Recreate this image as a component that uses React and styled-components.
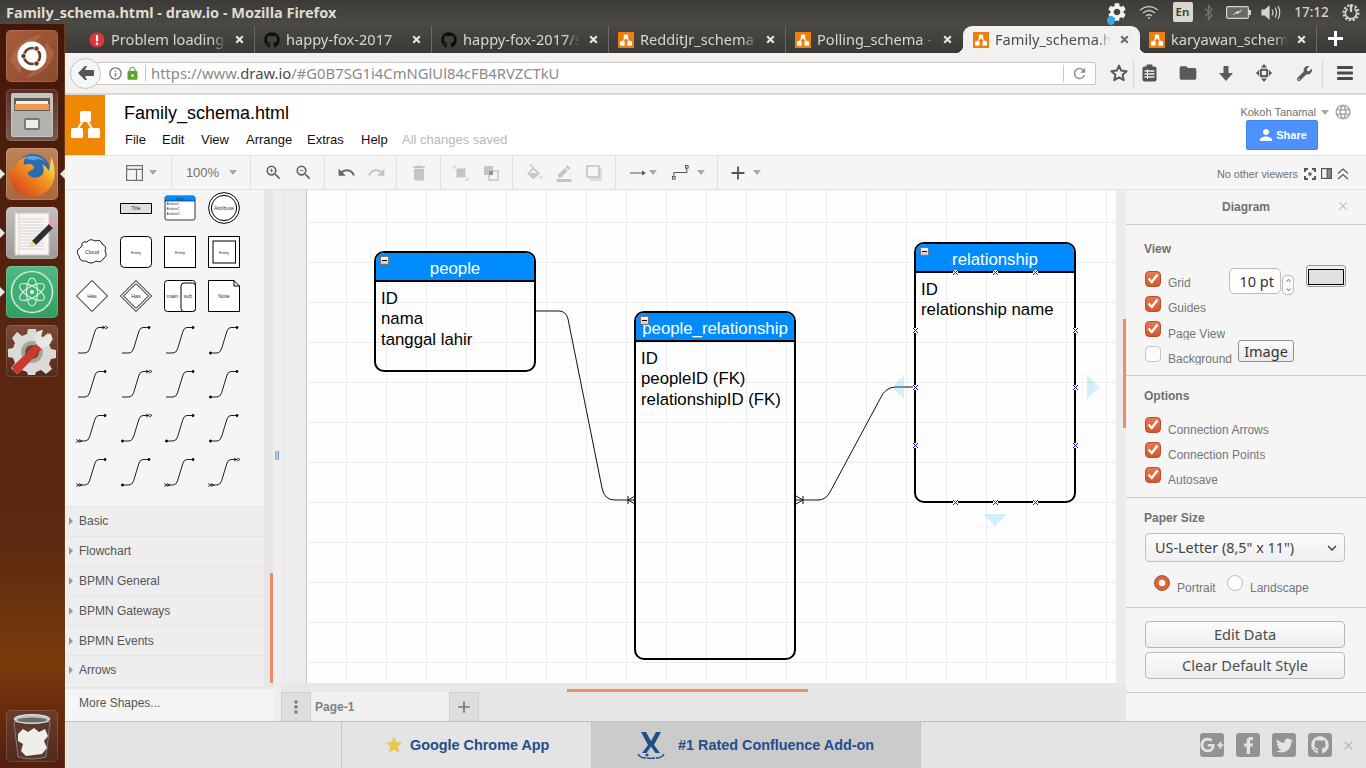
import React from "react";
import styled, { createGlobalStyle } from "styled-components";
import {
  MdZoomIn,
  MdZoomOut,
  MdUndo,
  MdRedo,
  MdDelete,
  MdBorderColor,
  MdAdd,
  MdFolder,
  MdSettings,
  MdRefresh,
  MdClose,
  MdPerson,
  MdMoreVert,
  MdLock,
  MdInfoOutline,
  MdExpandMore,
  MdKeyboardArrowUp,
  MdLanguage,
} from "react-icons/md";
import { FaGithub, FaWrench, FaGooglePlusG, FaFacebookF, FaTwitter } from "react-icons/fa";

const Global = createGlobalStyle`
  html, body {
    margin: 0;
    width: 1366px;
    height: 768px;
    overflow: hidden;
    font-family: "Liberation Sans", sans-serif;
  }
  * { box-sizing: border-box; }
`;

const UI_FONT = `"Noto Sans", "Open Sans", sans-serif`;

const Screen = styled.div`
  width: 1366px;
  height: 768px;
  display: flex;
  flex-direction: column;
  overflow: hidden;
`;
const TitleBar = styled.div`
  height: 24px;
  display: flex;
  align-items: center;
  padding-left: 6px;
  background: linear-gradient(#3c3b37, #4a4945);
  color: #dfdbd2;
  font: 700 14.5px ${UI_FONT};
`;
const TitleText = styled.div`
  flex: 1;
`;
const Tray = styled.div`
  display: flex;
  align-items: center;
  height: 24px;
  color: #d6d3cb;
`;
const TrayItem = styled.div`
  width: ${(p) => p.$w}px;
  display: flex;
  justify-content: center;
  align-items: center;
  position: relative;
`;
const BlueDot = styled.span`
  position: absolute;
  left: 1px;
  bottom: -1px;
  width: 8px;
  height: 9px;
  border-radius: 50%;
  background: #38a8e8;
`;
const LangBox = styled.div`
  width: 20px;
  height: 20px;
  margin-left: 1px;
  background: #dad7cf;
  color: #3c3b37;
  border-radius: 2px;
  font: 600 11.5px/20px ${UI_FONT};
  text-align: center;
`;
const Clock = styled.div`
  font: 500 13.5px ${UI_FONT};
  color: #d6d3cb;
`;
const Desktop = styled.div`
  flex: 1;
  display: flex;
  min-height: 0;
`;
const Launcher = styled.div`
  width: 65px;
  display: flex;
  flex-direction: column;
  align-items: center;
  gap: 7px;
  padding: 6px 1px 6px 0;
  background: linear-gradient(#451709 0%, #5a2611 45%, #5d2a10 70%, #7a3b0b 86%, #6e300c 90%, #541f0f 100%);
  border-right: 1px solid #6b3a18;
`;
const Tile = styled.div`
  width: 52px;
  height: 52px;
  border-radius: 5px;
  position: relative;
  background: ${(p) => p.$bg};
  box-shadow: inset 0 0 0 1px rgba(255, 255, 255, 0.14);
  margin-top: ${(p) => (p.$bottom ? "auto" : "0")};
  svg {
    display: block;
  }
  ${(p) =>
    p.$pip &&
    `&::before {
      content: "";
      position: absolute;
      left: -6px;
      top: 21px;
      border: 5px solid transparent;
      border-left-color: #e8e8e8;
    }`}
  ${(p) =>
    p.$active &&
    `&::after {
      content: "";
      position: absolute;
      right: -7px;
      top: 21px;
      border: 5px solid transparent;
      border-right-color: #e8e8e8;
    }`}
`;
const Browser = styled.div`
  flex: 1;
  min-width: 0;
  display: flex;
  flex-direction: column;
`;
const TabStrip = styled.div`
  height: 29px;
  display: flex;
  padding-left: 13px;
  background: linear-gradient(#4a4945, #3a3935);
`;
const Tab = styled.div`
  width: 177px;
  height: 27px;
  margin-top: 2px;
  padding: 0 8px 0 ${(p) => p.$pad || 9}px;
  display: flex;
  align-items: center;
  gap: 6px;
  position: relative;
  color: ${(p) => (p.$active ? "#4d4d4b" : "#d8d6d0")};
  font: 400 14.6px ${UI_FONT};
  border-right: 1px solid ${(p) => (p.$sep ? "#6a6964" : "transparent")};
  background: ${(p) => (p.$active ? "#f2f1f0" : "transparent")};
  border-radius: ${(p) => (p.$active ? "9px 9px 0 0" : "0")};
  ${(p) =>
    p.$active &&
    `&::before, &::after {
      content: "";
      position: absolute;
      bottom: 0;
      width: 8px;
      height: 8px;
    }
    &::before { left: -8px; background: radial-gradient(circle at 0 0, transparent 8px, #f2f1f0 8.5px); }
    &::after { right: -8px; background: radial-gradient(circle at 100% 0, transparent 8px, #f2f1f0 8.5px); }`}
`;
const TabText = styled.div`
  flex: 1;
  min-width: 0;
  margin-top: -2px;
  overflow: hidden;
  white-space: nowrap;
  -webkit-mask-image: linear-gradient(90deg, #000 88%, transparent 100%);
  mask-image: linear-gradient(90deg, #000 88%, transparent 100%);
`;
const NewTab = styled.div`
  width: 36px;
  display: flex;
  justify-content: center;
  align-items: center;
`;
const NavBar = styled.div`
  height: 42px;
  display: flex;
  align-items: center;
  padding-left: 5px;
  background: #f2f1f0;
  border-bottom: 2px solid #d8d7d5;
`;
const BackButton = styled.div`
  width: 31px;
  height: 31px;
  border-radius: 50%;
  flex: none;
  background: #f6f6f5;
  border: 1px solid #c4c4c2;
  display: flex;
  align-items: center;
  justify-content: center;
  position: relative;
  z-index: 1;
`;
const UrlBar = styled.div`
  width: 1002px;
  height: 23px;
  margin-left: -5px;
  display: flex;
  align-items: center;
  padding-left: 10px;
  background: #fff;
  border: 1px solid #c9c8c6;
  border-radius: 2px;
  color: #6f6f6f;
`;
const UrlIcon = styled.span`
  display: flex;
  width: ${(p) => p.$w}px;
  justify-content: center;
  color: ${(p) => p.$color || "#6f6f6f"};
`;
const UrlText = styled.div`
  flex: 1;
  padding-left: 5px;
  margin-left: 4px;
  border-left: 1px solid #c9c8c6;
  font: 400 14.8px/17px ${UI_FONT};
  color: #8a8a8a;
  b {
    font-weight: 400;
    color: #4b4b4b;
  }
`;
const Reload = styled.div`
  width: 32px;
  height: 17px;
  border-left: 1px solid #c9c8c6;
  display: flex;
  align-items: center;
  justify-content: center;
  color: #8e8e8e;
`;
const NavIcon = styled.div`
  width: ${(p) => p.$w}px;
  height: 28px;
  padding-left: ${(p) => p.$pad || 0}px;
  display: flex;
  align-items: center;
  justify-content: center;
  color: #5a5a5a;
  border-right: ${(p) => (p.$sep ? "1px solid #d8d7d5" : "0")};
`;
const Header = styled.div`
  height: 60px;
  display: flex;
  background: #fff;
`;
const LogoBox = styled.div`
  width: 40px;
  background: #f08705;
  svg {
    display: block;
  }
`;
const DocInfo = styled.div`
  padding: 6px 0 0 19px;
`;
const DocTitle = styled.div`
  font-size: 18px;
  line-height: 24px;
  color: #000;
`;
const MenuRow = styled.div`
  display: flex;
  margin-top: 7px;
  font-size: 13px;
  line-height: 16px;
  color: #111;
`;
const MenuItem = styled.div`
  width: ${(p) => p.$w}px;
  padding-left: 1px;
`;
const Saved = styled.div`
  margin-left: 1px;
  color: #b8b8b8;
`;
const Account = styled.div`
  margin-left: auto;
  display: flex;
  flex-direction: column;
  align-items: flex-end;
  padding-right: 14px;
  padding-top: 8px;
`;
const UserRow = styled.div`
  display: flex;
  align-items: center;
  color: #707070;
  font-size: 11px;
  height: 17px;
`;
const Caret = styled.span`
  display: inline-block;
  width: 0;
  height: 0;
  margin: ${(p) => p.$m || "2px 0 0 5px"};
  border: 4.5px solid transparent;
  border-top: 5px solid ${(p) => p.$color || "#a8a8a8"};
  border-bottom: 0;
`;
const ShareButton = styled.div`
  width: 72px;
  height: 30px;
  margin: 0 34px 0 0;
  display: flex;
  align-items: center;
  justify-content: center;
  gap: 1px;
  background: #4d90fe;
  border: 1px solid #3f82ee;
  border-radius: 2px;
  color: #fff;
  font-size: 11px;
  font-weight: 700;
`;
const Toolbar = styled.div`
  height: 35px;
  display: flex;
  background: #f5f5f5;
  border-top: 1px solid #e2e2e2;
  border-bottom: 1px solid #e2e2e2;
`;
const ToolGroup = styled.div`
  width: ${(p) => p.$w}px;
  padding-left: ${(p) => p.$pad}px;
  display: flex;
  align-items: center;
  border-right: ${(p) => (p.$last ? "0" : "1px solid #e0e0e0")};
`;
const Tool = styled.div`
  width: ${(p) => p.$w || 30}px;
  display: flex;
  justify-content: center;
  align-items: center;
  color: ${(p) => (p.$off ? "#c4c4c4" : "#666")};
`;
const ZoomLabel = styled.div`
  width: 39px;
  text-align: center;
  font-size: 13px;
  color: #707070;
`;
const Viewers = styled.div`
  margin-left: auto;
  display: flex;
  align-items: center;
  gap: 5px;
  padding: 2px 17px 0 0;
  font-size: 10.8px;
  color: #707070;
`;
const ViewersText = styled.div`
  margin-right: 1px;
`;
const Content = styled.div`
  flex: 1;
  min-height: 0;
  display: flex;
`;
const LeftColumn = styled.div`
  width: 208px;
  display: flex;
  flex-direction: column;
`;
const LeftTop = styled.div`
  flex: 1;
  display: flex;
  min-height: 0;
  position: relative;
  background: #e6e6e6;
`;
const Sidebar = styled.div`
  width: 199px;
  background: #f5f5f5;
`;
const Palette = styled.div`
  height: 316px;
  display: grid;
  grid-template-columns: repeat(4, 32px);
  grid-auto-rows: 32px;
  gap: 12px;
  padding: 2px 0 0 11px;
`;
const SectionRow = styled.div`
  height: 29.8px;
  display: flex;
  align-items: center;
  padding-left: 4px;
  gap: 6px;
  background: #eeeeee;
  border-top: 1px solid #e5e5e5;
  font-size: 12px;
  color: #555;
`;
const Arrow = styled.span`
  width: 0;
  height: 0;
  border: 4.5px solid transparent;
  border-left: 4px solid #999;
  border-right: 0;
`;
const ScrollThumb = styled.div`
  position: absolute;
  background: #f08c68;
`;
const LeftThumb = styled(ScrollThumb)`
  right: 0;
  top: 383px;
  width: 3px;
  height: 110px;
`;
const MoreShapes = styled.div`
  height: 35px;
  padding: 7px 0 0 14px;
  background: #f5f5f5;
  border-top: 3px solid #e8e8e8;
  font-size: 12px;
  color: #555;
`;
const Splitter = styled.div`
  width: 8px;
  padding-top: 260px;
  background: #eeeeee;
  text-align: center;
  font-size: 9px;
  color: #555;
`;
const CenterColumn = styled.div`
  width: 845px;
  position: relative;
  display: flex;
  flex-direction: column;
  background: #e7e7e7;
`;
const Canvas = styled.div`
  height: 493px;
  padding: 0 10px 0 25px;
  background: #ececec;
`;
const Page = styled.div`
  width: 810px;
  height: 493px;
  position: relative;
  background-color: #fff;
  border-left: 1px solid #c8c8c8;
  background-image: linear-gradient(#ececec 1px, transparent 1px), linear-gradient(90deg, #ececec 1px, transparent 1px),
    linear-gradient(#f7f7f7 1px, transparent 1px), linear-gradient(90deg, #f7f7f7 1px, transparent 1px);
  background-size: 40px 40px, 40px 40px, 8px 8px, 8px 8px;
  background-position: 0 32px, -1px 0, 0 0, -1px 0;
`;
const Node = styled.div`
  position: absolute;
  left: ${(p) => p.$x - 308}px;
  top: ${(p) => p.$y - 190}px;
  width: 162px;
  height: ${(p) => p.$h}px;
  border: 2px solid #000;
  border-radius: 10px;
  overflow: hidden;
  color: #000;
  font-size: 16.8px;
`;
const NodeHead = styled.div`
  height: 29px;
  background: #008cff;
  border-bottom: 2px solid #000;
  color: #fff;
  text-align: center;
  line-height: 32px;
`;
const NodeBody = styled.div`
  padding: 7px 0 0 5px;
  line-height: 20.4px;
`;
const Fold = styled.div`
  position: absolute;
  left: 4px;
  top: 3px;
  width: 9px;
  height: 9px;
  background: linear-gradient(#fff, #c8c8c8);
  border: 1px solid #777;
  &::after {
    content: "";
    position: absolute;
    left: 1px;
    right: 1px;
    top: 2.5px;
    height: 1.5px;
    background: #000;
  }
`;
const Overlay = styled.svg`
  position: absolute;
  left: -1px;
  top: 0;
  pointer-events: none;
`;
const HThumb = styled(ScrollThumb)`
  left: 286px;
  top: 499px;
  width: 241px;
  height: 3px;
`;
const GutterBar = styled.div`
  height: 9px;
`;
const PageTabs = styled.div`
  height: 29px;
  display: flex;
`;
const PageButton = styled.div`
  width: 30px;
  display: flex;
  align-items: center;
  justify-content: center;
  background: #dedede;
  color: #777;
  border: 1px solid #d0d0d0;
  border-bottom: 0;
`;
const PageName = styled.div`
  width: 138px;
  padding: 8px 0 0 4px;
  background: #f0f0f0;
  font-size: 12px;
  font-weight: 700;
  color: #808080;
`;
const RightPanel = styled.div`
  flex: 1;
  position: relative;
  display: flex;
  flex-direction: column;
  background: #f5f5f5;
`;
const RightThumb = styled(ScrollThumb)`
  left: -3px;
  top: 129px;
  width: 3px;
  height: 109px;
`;
const PanelTitle = styled.div`
  height: 35px;
  position: relative;
  border-bottom: 1px solid #c8c8c8;
  text-align: center;
  font-size: 12px;
  font-weight: 700;
  line-height: 34px;
  color: #707070;
`;
const PanelClose = styled.div`
  position: absolute;
  right: 16px;
  top: 9px;
  color: #b9c2cc;
  display: flex;
`;
const Section = styled.div`
  padding: ${(p) => p.$pt}px 0 ${(p) => p.$pb}px 19px;
  border-bottom: 1px solid #c8c8c8;
`;
const Heading = styled.div`
  margin-left: -1px;
  margin-bottom: ${(p) => p.$mb}px;
  font-size: 12px;
  line-height: 14px;
  font-weight: 700;
  color: #707070;
`;
const CheckRow = styled.div`
  height: 25px;
  display: flex;
  align-items: center;
`;
const CheckBox = styled.span`
  width: 16px;
  height: 16px;
  flex: none;
  display: flex;
  align-items: center;
  justify-content: center;
  border-radius: 4px;
  border: 1px solid ${(p) => (p.$on ? "#b5512c" : "#c4c4c4")};
  background: ${(p) => (p.$on ? "linear-gradient(#e9794f, #d0582e)" : "linear-gradient(#f8f8f8, #fff)")};
`;
const CheckLabel = styled.span`
  flex: none;
  width: ${(p) => (p.$w ? `${p.$w}px` : "auto")};
  margin: ${(p) => (p.$low ? 11 : 9)}px 0 0 7px;
  height: ${(p) => (p.$clip ? "13px" : "auto")};
  overflow: hidden;
  font-size: 12px;
  line-height: 14px;
  color: #757575;
`;
const SpinInput = styled.div`
  width: 52px;
  height: 26px;
  margin-top: 5px;
  padding-right: 6px;
  text-align: right;
  background: #fff;
  border: 1px solid #bdbdbd;
  border-radius: 5px;
  font: 400 14.5px/24px ${UI_FONT};
  color: #333;
`;
const Spinner = styled.div`
  width: 12px;
  height: 20px;
  margin: 13px 0 0 1px;
  display: flex;
  flex-direction: column;
  align-items: center;
  justify-content: space-evenly;
  background: #f8f8f8;
  border: 1px solid #bdbdbd;
  border-radius: 4px;
`;
const Swatch = styled.div`
  width: 40px;
  height: 22px;
  margin: -5px 0 0 12px;
  padding: 3px 1px 3px 1px;
  border: 1px solid #999;
  border-radius: 3px;
  background: #f0f0f0;
  &::after {
    content: "";
    display: block;
    height: 14px;
    background: #e0e0e0;
    border: 1px solid #000;
  }
`;
const SmallButton = styled.div`
  width: 56px;
  height: 22px;
  margin-top: -5px;
  text-align: center;
  background: linear-gradient(#fafafa, #eaeaea);
  border: 1px solid #8f8f8f;
  border-radius: 3px;
  font: 400 14.5px/20px ${UI_FONT};
  color: #333;
`;
const SelectBox = styled.div`
  width: 200px;
  height: 29px;
  padding: 0 3px 0 9px;
  display: flex;
  align-items: center;
  justify-content: space-between;
  background: linear-gradient(#fbfbfb, #efefef);
  border: 1px solid #c0c0c0;
  border-radius: 4px;
  font: 400 14.4px ${UI_FONT};
  color: #444;
`;
const RadioRow = styled.div`
  display: flex;
  align-items: center;
  height: 20px;
  margin-top: 11px;
  padding-left: 9px;
`;
const Radio = styled.span`
  width: 16px;
  height: 16px;
  flex: none;
  border-radius: 50%;
  border: ${(p) => (p.$on ? "1px solid #b5512c" : "1px solid #bdbdbd")};
  background: ${(p) =>
    p.$on ? "radial-gradient(circle, #fff 0 3px, #dd6a3e 3.6px, #d0582e 100%)" : "#fff"};
`;
const RadioLabel = styled.span`
  width: ${(p) => p.$w}px;
  margin: 9px 0 0 7px;
  font-size: 12px;
  color: #757575;
`;
const PanelButton = styled.div`
  width: 200px;
  height: 27px;
  margin-bottom: 4px;
  text-align: center;
  background: linear-gradient(#fbfbfb, #eeeeee);
  border: 1px solid #b8b8b8;
  border-radius: 4px;
  font: 400 14.6px/25px ${UI_FONT};
  color: #4d4d4d;
`;
const Footer = styled.div`
  height: 47px;
  display: flex;
  background: #e4e4e4;
  border-top: 1px solid #c4c4c4;
`;
const FooterCell = styled.div`
  width: ${(p) => p.$w}px;
  display: flex;
  align-items: center;
  padding-left: ${(p) => p.$pad}px;
  gap: ${(p) => p.$gap}px;
  background: ${(p) => (p.$dark ? "#cbcbcb" : "#e4e4e4")};
  border-right: 1px solid #c4c4c4;
  color: #224e8c;
  font-size: 14.4px;
  font-weight: 700;
`;
const Socials = styled.div`
  margin-left: auto;
  display: flex;
  align-items: center;
  gap: 12px;
  padding-right: 10px;
`;
const Social = styled.div`
  width: 24px;
  height: 24px;
  display: flex;
  align-items: center;
  justify-content: center;
  overflow: hidden;
  background: #939393;
  border-radius: 3px;
  color: #e4e4e4;
`;
const FooterClose = styled.div`
  display: flex;
  margin-left: -3px;
  color: #a9bad0;
`;

const DrawioMark = () => (
  <svg width="40" height="60" viewBox="0 0 40 60">
    <path d="M20 22 L11 37 M20 22 L29 37" stroke="#fff" strokeWidth="2" fill="none" />
    <rect x="15" y="16" width="11" height="11" rx="1.5" fill="#fff" />
    <rect x="6" y="33" width="12" height="10" rx="1.5" fill="#fff" />
    <rect x="23" y="33" width="12" height="10" rx="1.5" fill="#fff" />
  </svg>
);

const Favicon = () => (
  <svg width="16" height="16" viewBox="0 0 16 16" style={{ flex: "none" }}>
    <rect width="16" height="16" fill="#ef7f0a" />
    <path d="M8 5 L4 10 M8 5 L12 10" stroke="#fff" strokeWidth="1.2" />
    <rect x="5.8" y="2.6" width="4.4" height="4.2" fill="#fff" />
    <rect x="2" y="9.4" width="4.6" height="4.2" fill="#fff" />
    <rect x="9.4" y="9.4" width="4.6" height="4.2" fill="#fff" />
  </svg>
);

const ErrorIcon = () => (
  <svg width="16" height="16" viewBox="0 0 16 16" style={{ flex: "none" }}>
    <circle cx="8" cy="8" r="7.6" fill="#d9363e" />
    <rect x="6.9" y="3" width="2.2" height="6.6" rx="1" fill="#fff" />
    <circle cx="8" cy="11.8" r="1.3" fill="#fff" />
  </svg>
);

const GithubIcon = () => <FaGithub size={16} color="#0d0d0d" style={{ flex: "none" }} />;

const TabX = ({ dark }) => (
  <svg width="9" height="9" viewBox="0 0 9 9" style={{ flex: "none", margin: "0 2px 0 3px" }}>
    <path d="M1.2 1.2 L7.8 7.8 M7.8 1.2 L1.2 7.8" stroke={dark ? "#6a6a6a" : "#e6e4de"} strokeWidth="2.2" />
  </svg>
);

const tabs = [
  { text: "Problem loading p", icon: <ErrorIcon />, sep: true, pad: 11 },
  { text: "happy-fox-2017", icon: <GithubIcon />, sep: true },
  { text: "happy-fox-2017/s", icon: <GithubIcon />, sep: true },
  { text: "RedditJr_schema", icon: <Favicon />, sep: true },
  { text: "Polling_schema - (", icon: <Favicon /> },
  { text: "Family_schema.ht", icon: <Favicon />, active: true, pad: 10 },
  { text: "karyawan_schema", icon: <Favicon />, sep: true },
];

const UbuntuArt = () => (
  <svg width="52" height="52" viewBox="0 0 52 52">
    <path d="M4 30 Q12 8 38 4 Q20 14 14 44 Z M48 22 Q44 44 18 48 Q36 38 40 12 Z" fill="#c98a68" opacity="0.35" />
    <circle cx="26" cy="26" r="14.5" fill="#fff" />
    <circle cx="26" cy="26" r="8" fill="none" stroke="#6b3a22" strokeWidth="2.6" />
    <circle cx="17.5" cy="26" r="2.6" fill="#6b3a22" stroke="#fff" strokeWidth="0.8" />
    <circle cx="30.5" cy="18.5" r="2.6" fill="#6b3a22" stroke="#fff" strokeWidth="0.8" />
    <circle cx="30.5" cy="33.5" r="2.6" fill="#6b3a22" stroke="#fff" strokeWidth="0.8" />
  </svg>
);

const FilesArt = () => (
  <svg width="52" height="52" viewBox="0 0 52 52">
    <rect x="5" y="4" width="42" height="44" rx="2" fill="#c6c5c1" />
    <rect x="8" y="9" width="36" height="14" fill="#5f5d58" />
    <rect x="10" y="12" width="32" height="3" fill="#f3f0e6" />
    <rect x="9" y="15" width="34" height="6" fill="#ee9a52" />
    <path d="M8 22 H44 L46 24 V47 H6 V24 Z" fill="#b3b2ae" />
    <rect x="19" y="30" width="14" height="10" rx="1" fill="#ecebe8" stroke="#5c5c5a" strokeWidth="1.4" />
  </svg>
);

const FirefoxArt = () => (
  <svg width="52" height="52" viewBox="0 0 52 52">
    <defs>
      <linearGradient id="fox" x1="0.9" y1="0.1" x2="0.1" y2="0.9">
        <stop offset="0" stopColor="#ffe04a" />
        <stop offset="0.35" stopColor="#f59a22" />
        <stop offset="1" stopColor="#d9401b" />
      </linearGradient>
    </defs>
    <circle cx="27" cy="23" r="17" fill="#2b6cb0" />
    <path d="M18 10 Q30 4 40 14 Q34 10 28 12 Q22 12 18 10 Z" fill="#5ca3dc" />
    <path
      d="M45 9 C51 22 50 36 40 44 C30 51 14 50 7 38 C3 31 4 22 6 17 C7 20 9 21 9 21 C10 14 16 10 20 9 C17 13 17 16 19 17 C22 15 28 16 28 20 C26 23 22 23 22 25 C22 28 27 31 33 29 C38 27 39 22 36 16 C41 19 43 23 43 23 C44 18 45 14 45 9 Z"
      fill="url(#fox)"
    />
  </svg>
);

const EditorArt = () => (
  <svg width="52" height="52" viewBox="0 0 52 52">
    <rect x="9" y="6" width="34" height="42" fill="#f7f6f3" stroke="#c9c9c6" />
    {[12, 15, 18, 21, 24, 27, 30, 33, 36, 39, 42].map((y) => (
      <line key={y} x1="14" x2="38" y1={y} y2={y} stroke="#c4c4c4" strokeWidth="0.7" />
    ))}
    <line x1="13" x2="13" y1="6" y2="48" stroke="#eab0b0" strokeWidth="0.7" />
    <path d="M26 34 L30 38 L47 21 L43 17 Z" fill="#2f2f2f" />
    <path d="M43 17 L47 21 L50 18 Q51 16 49 14 L48 13 Q46 12 44.5 13.5 Z" fill="#ee9ac2" />
    <path d="M26 34 L30 38 L22 41 Z" fill="#f2dc80" />
  </svg>
);

const AtomArt = () => (
  <svg width="52" height="52" viewBox="0 0 52 52">
    <circle cx="26" cy="26" r="20.5" fill="#3fae73" stroke="#cfe8d9" strokeWidth="1.6" />
    <g fill="none" stroke="#d8efe2" strokeWidth="1.2">
      <ellipse cx="26" cy="26" rx="14" ry="5.5" transform="rotate(30 26 26)" />
      <ellipse cx="26" cy="26" rx="14" ry="5.5" transform="rotate(-30 26 26)" />
      <ellipse cx="26" cy="26" rx="14" ry="5.5" transform="rotate(90 26 26)" />
    </g>
    <circle cx="26" cy="26" r="2" fill="#e8f5ec" />
  </svg>
);

const SettingsArt = () => (
  <svg width="52" height="52" viewBox="0 0 52 52">
    <path
      d="M22 4 H30 L31 10 L37 12 L42 8 L47 14 L43 19 L45 24 L50 25 V33 L45 34 L43 39 L46 44 L40 49 L35 45 L30 47 L29 50 H22 L21 47 L16 45 L11 49 L5 43 L9 38 L7 33 L2 32 V24 L7 23 L9 18 L6 13 L11 7 L16 11 L21 9 Z"
      fill="#dcdad6"
    />
    <circle cx="26" cy="27" r="11" fill="#a7a5a1" />
    <circle cx="26" cy="27" r="7" fill="#6f463a" />
    <path d="M8 47 L12 49 L36 24 L30 19 L6 42 Z" fill="#c93a2e" />
    <path d="M30 19 L36 24 L44 19 Q48 13 44 8 L39 14 L35 12 L37 5 Q30 5 29 11 Z" fill="#e8e6e2" />
  </svg>
);

const TrashArt = () => (
  <svg width="52" height="52" viewBox="0 0 52 52">
    <path d="M8 12 L12 47 Q26 51 40 47 L44 12 Z" fill="#5a3a2c" stroke="#8a7a70" />
    <ellipse cx="26" cy="9" rx="18" ry="4.5" fill="#c5c5c3" stroke="#e2e2e0" />
    <ellipse cx="26" cy="10" rx="15" ry="2.5" fill="#6b6b69" />
    <path
      d="M12 24 L17 19 L22 22 L28 18 L33 22 L39 19 L42 26 L38 31 L41 38 L36 44 L28 45 L20 46 L15 41 L17 34 L12 31 Z"
      fill="#eeeeec"
    />
  </svg>
);

const LayoutIcon = () => (
  <svg width="17" height="16" viewBox="0 0 17 16" fill="none" stroke="#707070" strokeWidth="1.2">
    <rect x="0.6" y="0.6" width="15.8" height="14.8" />
    <path d="M0.6 4.4 H16.4 M10.5 4.4 V15.4" />
  </svg>
);

const ToFrontIcon = () => (
  <svg width="16" height="16" viewBox="0 0 16 16" fill="none" stroke="#c8c8c8" strokeWidth="1.2">
    <path d="M3.5 1 H1 V4 M15 12.5 V15 H12" />
    <rect x="3.5" y="3.5" width="9" height="9" fill="#c4c4c4" stroke="none" />
  </svg>
);

const ToBackIcon = () => (
  <svg width="16" height="16" viewBox="0 0 16 16">
    <rect x="1" y="1" width="9" height="9" fill="#c4c4c4" />
    <rect x="6" y="6" width="9" height="9" fill="none" stroke="#c4c4c4" strokeWidth="1.4" />
    <rect x="6" y="6" width="4" height="4" fill="#8f8f8f" />
  </svg>
);

const BucketIcon = () => (
  <svg width="17" height="17" viewBox="0 0 17 17">
    <path d="M4 0.5 L8.5 5" stroke="#c8c8c8" strokeWidth="1.6" />
    <path d="M7.5 3 L14 9.5 L7.5 15.5 L1 9.5 Z" fill="#c8c8c8" />
    <path d="M7.5 5.5 L11 9 H4 Z" fill="#f5f5f5" />
    <circle cx="15" cy="13.5" r="1.7" fill="#dcdcdc" />
  </svg>
);

const ShadowIcon = () => (
  <svg width="16" height="16" viewBox="0 0 16 16">
    <rect x="3" y="3" width="13" height="13" fill="#dedede" />
    <rect x="1" y="1" width="12" height="11" fill="#f5f5f5" stroke="#c4c4c4" strokeWidth="1.6" />
  </svg>
);

const ArrowIcon = () => (
  <svg width="16" height="10" viewBox="0 0 16 10">
    <path d="M0 5 H12" stroke="#555" strokeWidth="1" />
    <path d="M12 2.5 L16 5 L12 7.5 Z" fill="#555" />
  </svg>
);

const WaypointIcon = () => (
  <svg width="17" height="15" viewBox="0 0 17 15" fill="none" stroke="#555" strokeWidth="1">
    <rect x="0.5" y="11.5" width="2.6" height="2.6" />
    <rect x="13.5" y="0.5" width="2.6" height="2.6" />
    <path d="M1.8 11.5 V7.5 H14.8 V3.1" />
  </svg>
);

const BackArrow = () => (
  <svg width="16" height="14" viewBox="0 0 16 14" fill="#555">
    <path d="M0 7 L7 0 H9 L7 4 H15 Q16 4 16 5 V9 Q16 10 15 10 H7 L9 14 H7 Z" />
  </svg>
);

const PlusIcon = () => (
  <svg width="15" height="15" viewBox="0 0 15 15" fill="#fff">
    <path d="M6 0 H9 V6 H15 V9 H9 V15 H6 V9 H0 V6 H6 Z" />
  </svg>
);

const StarOutline = () => (
  <svg width="18" height="18" viewBox="0 0 18 18" fill="none" stroke="#5a5a5a" strokeWidth="2" strokeLinejoin="round">
    <path d="M9 1.6 L11.2 6.6 L16.6 7.2 L12.6 10.8 L13.7 16.2 L9 13.4 L4.3 16.2 L5.4 10.8 L1.4 7.2 L6.8 6.6 Z" />
  </svg>
);

const DownloadIcon = () => (
  <svg width="14" height="15" viewBox="0 0 14 15" fill="#5a5a5a">
    <path d="M4.5 0 H9.5 V7 H14 L7 15 L0 7 H4.5 Z" />
  </svg>
);

const MoveIcon = () => (
  <svg width="16" height="18" viewBox="0 0 16 18" fill="#535353">
    <path d="M8 0 L11 3.4 H5 Z M8 18 L11 14.6 H5 Z M0 9 L3 6 V12 Z M16 9 L13 6 V12 Z" />
    <rect x="3.8" y="4.8" width="8.4" height="8.4" rx="1.5" />
    <rect x="5.8" y="6.8" width="4.4" height="4.4" fill="#f2f1f0" />
  </svg>
);

const ClipboardIcon = () => (
  <svg width="15" height="18" viewBox="0 0 15 18">
    <rect x="0.5" y="2.5" width="14" height="15" rx="2" fill="#535353" />
    <rect x="4.5" y="0.5" width="6" height="3.5" rx="1" fill="#535353" />
    <path d="M2.5 7 H12.5 M2.5 10 H12.5 M2.5 13 H12.5" stroke="#f2f1f0" strokeWidth="1.4" />
    <path d="M5.5 5.5 V15" stroke="#f2f1f0" strokeWidth="1" />
  </svg>
);

const MenuIcon = () => (
  <svg width="16" height="14" viewBox="0 0 16 14" fill="#4a4a4a">
    <rect width="16" height="3" rx="1" />
    <rect y="5.5" width="16" height="3" rx="1" />
    <rect y="11" width="16" height="3" rx="1" />
  </svg>
);

const FocusIcon = () => (
  <svg width="12" height="12" viewBox="0 0 12 12" fill="#555">
    <path d="M0 0 H4 V2 H2 V4 H0 Z M12 0 H8 V2 H10 V4 H12 Z M0 12 H4 V10 H2 V8 H0 Z M12 12 H8 V10 H10 V8 H12 Z" />
    <rect x="4.5" y="4.5" width="3" height="3" />
  </svg>
);

const SplitIcon = () => (
  <svg width="11" height="11" viewBox="0 0 11 11" fill="none" stroke="#555" strokeWidth="1.2">
    <rect x="0.6" y="0.6" width="9.8" height="9.8" />
    <rect x="6.2" y="0.6" width="4.2" height="9.8" fill="#888" />
  </svg>
);

const CollapseIcon = () => (
  <svg width="12" height="12" viewBox="0 0 12 12" fill="none" stroke="#555" strokeWidth="1.2">
    <path d="M1 5.5 L6 1 L11 5.5 M1 11 L6 6.5 L11 11" />
  </svg>
);

const WifiIcon = () => (
  <svg width="20" height="15" viewBox="0 0 20 15" fill="none" stroke="#c8c5bd" strokeWidth="1.4">
    <path d="M1 5 Q10 -2 19 5 M4 8 Q10 3 16 8 M7 11 Q10 8.6 13 11" />
    <circle cx="10" cy="13" r="1" fill="#c8c5bd" stroke="none" />
  </svg>
);

const BluetoothIcon = () => (
  <svg width="9" height="17" viewBox="0 0 9 17" fill="none" stroke="#77756f" strokeWidth="1.2">
    <path d="M1 4.5 L8 11.5 L4.5 15.5 V1.5 L8 5.5 L1 12.5" />
  </svg>
);

const BatteryIcon = () => (
  <svg width="25" height="13" viewBox="0 0 25 13">
    <rect x="0.6" y="0.6" width="21.8" height="11.8" rx="1.5" fill="#6a6964" stroke="#d6d3cb" strokeWidth="1.2" />
    <rect x="23" y="4" width="2" height="5" fill="#d6d3cb" />
    <path d="M7 9 L11 6 L11 8 L16 4 L12 6.6 L12 5 Z" fill="#e8e6e0" stroke="#e8e6e0" strokeWidth="0.6" />
  </svg>
);

const VolumeIcon = () => (
  <svg width="20" height="15" viewBox="0 0 20 15" fill="none" stroke="#d6d3cb" strokeWidth="1.2">
    <path d="M1 5 H4 L8 1.5 V13.5 L4 10 H1 Z" fill="#d6d3cb" />
    <path d="M11 4.5 Q13 7.5 11 10.5 M14 2.5 Q17 7.5 14 12.5 M17 1 Q20.5 7.5 17 14" />
  </svg>
);

const PowerIcon = () => (
  <svg width="18" height="18" viewBox="0 0 24 24" fill="none" stroke="#d6d3cb">
    <circle cx="12" cy="13" r="10" strokeWidth="3" strokeDasharray="3 2.2" />
    <path d="M7.5 7.5 A7.5 7.5 0 1 0 16.5 7.5" strokeWidth="2.2" />
    <path d="M12 2 V12" strokeWidth="3" />
  </svg>
);

const StarBadge = () => (
  <svg width="16" height="16" viewBox="0 0 16 16">
    <path d="M8 0.6 L10.2 5.4 L15.4 6 L11.6 9.5 L12.6 14.8 L8 12.2 L3.4 14.8 L4.4 9.5 L0.6 6 L5.8 5.4 Z" fill="#f0c83c" stroke="#dcc58c" />
  </svg>
);

const AtlassianMark = () => (
  <svg width="28" height="28" viewBox="0 0 28 28">
    <path d="M4 1 H9 L14 10 L19 1 H24 L17 14 L23 22 H18.5 L14 15.5 L9.5 22 H5 L11 14 Z" fill="#1f4f8b" />
    <path d="M1 23 Q3 27 9 27 M27 23 Q25 27 19 27 M10 27 Q14 28 18 27" fill="none" stroke="#1f4f8b" strokeWidth="1.6" />
    <circle cx="10" cy="24" r="1.6" fill="#1f4f8b" />
  </svg>
);

const InkBox = styled.svg`
  display: block;
`;
const thumbText = { fontFamily: "Liberation Sans", textAnchor: "middle", fill: "#333" };

const Thumb = ({ children }) => (
  <InkBox width="32" height="32" viewBox="0 0 32 32" fill="#fff" stroke="#000">
    {children}
  </InkBox>
);

const Label = ({ x = 16, y = 17.5, size = 4, children }) => (
  <text x={x} y={y} fontSize={size} stroke="none" {...thumbText}>
    {children}
  </text>
);

const Curve = ({ start, end }) => (
  <Thumb>
    <path d="M2 29 H9 Q12 29 13.5 25 L19 7 Q20 3.5 23 3.5 H29" fill="none" strokeWidth="1" stroke="#222" />
    {start === 1 && <circle cx="2.5" cy="29" r="1" fill="#000" />}
    {start === 2 && <path d="M0 27.5 L3 29 L0 30.5 M3 27.5 L6 29 L3 30.5" fill="none" strokeWidth="0.7" />}
    {end === 1 && <circle cx="29" cy="3.5" r="1" fill="#000" />}
    {end === 2 && <path d="M26 2 L29 3.5 L26 5 M29 2 L32 3.5 L29 5" fill="none" strokeWidth="0.7" />}
  </Thumb>
);

const paletteThumbs = [
  null,
  <Thumb>
    <rect x="0.5" y="11.5" width="31" height="10" fill="#e0e0e0" />
    <Label y="17.5" size="5">Title</Label>
  </Thumb>,
  <Thumb>
    <rect x="1" y="4" width="30" height="24" rx="2" fill="#fff" stroke="#333" />
    <path d="M1 6 Q1 4 3 4 H29 Q31 4 31 6 V9 H1 Z" fill="#008cff" stroke="none" />
    <path d="M1 9 H31" strokeWidth="0.6" />
    <Label y="8" size="3">Entity</Label>
    <Label x="9" y="13" size="3">Attribute1</Label>
    <Label x="9" y="18" size="3">Attribute2</Label>
    <Label x="9" y="23" size="3">Attribute3</Label>
  </Thumb>,
  <Thumb>
    <circle cx="16" cy="16" r="15.4" strokeWidth="1" />
    <circle cx="16" cy="16" r="12.6" strokeWidth="1" />
    <Label y="18" size="5.4">Attribute</Label>
  </Thumb>,
  <Thumb>
    <path d="M6 10 Q5 5 11 6 Q14 2 19 5 Q25 3 26 8 Q31 10 29 15 Q32 20 27 23 Q25 27 20 25 Q15 29 10 25 Q4 26 3 20 Q-1 15 4 12 Z" strokeWidth="0.9" />
    <Label size="5.4">Cloud</Label>
  </Thumb>,
  <Thumb>
    <rect x="0.5" y="0.5" width="31" height="31" rx="4" />
    <Label>Entity</Label>
  </Thumb>,
  <Thumb>
    <rect x="0.5" y="0.5" width="31" height="31" />
    <Label>Entity</Label>
  </Thumb>,
  <Thumb>
    <rect x="0.5" y="0.5" width="31" height="31" />
    <rect x="5" y="5" width="22.5" height="22" />
    <Label>Entity</Label>
  </Thumb>,
  <Thumb>
    <path d="M16 0.5 L31.5 16 L16 31.5 L0.5 16 Z" />
    <Label size="5.4">Has</Label>
  </Thumb>,
  <Thumb>
    <path d="M16 0.5 L31.5 16 L16 31.5 L0.5 16 Z" />
    <path d="M16 3.5 L28.5 16 L16 28.5 L3.5 16 Z" />
    <Label size="5.4">Has</Label>
  </Thumb>,
  <Thumb>
    <rect x="0.5" y="0.5" width="31" height="31" rx="3" />
    <rect x="17" y="3" width="14.5" height="28.5" rx="3" />
    <Label x="8.5" y="18" size="5.4">main</Label>
    <Label x="24" y="18" size="5.4">sub</Label>
  </Thumb>,
  <Thumb>
    <path d="M0.5 0.5 H26 L31.5 6 V31.5 H0.5 Z M26 0.5 V6 H31.5" />
    <Label size="5.4">Note</Label>
  </Thumb>,
  <Curve end={2} />,
  <Curve end={1} />,
  <Curve end={1} />,
  <Curve start={1} end={1} />,
  <Curve end={1} />,
  <Curve end={2} />,
  <Curve end={1} />,
  <Curve start={1} end={1} />,
  <Curve start={2} end={1} />,
  <Curve start={1} end={2} />,
  <Curve start={1} end={1} />,
  <Curve start={1} end={1} />,
  <Curve start={2} end={1} />,
  <Curve start={1} end={1} />,
  <Curve start={2} end={1} />,
  <Curve start={2} end={2} />,
];

const sections = ["Basic", "Flowchart", "BPMN General", "BPMN Gateways", "BPMN Events", "Arrows"];

const menu = [
  ["File", 37],
  ["Edit", 39],
  ["View", 45],
  ["Arrange", 61],
  ["Extras", 54],
  ["Help", 41],
];

const nodes = [
  { x: 375, y: 251, h: 121, title: "people", rows: ["ID", "nama", "tanggal lahir"] },
  { x: 635, y: 311, h: 349, title: "people_relationship", rows: ["ID", "peopleID (FK)", "relationshipID (FK)"] },
  { x: 915, y: 242, h: 261, title: "relationship", rows: ["ID", "relationship name"] },
];

const marks = [
  [955, 272], [995, 272], [1035, 272],
  [955, 502], [995, 502], [1035, 502],
  [915, 330], [915, 387], [915, 445],
  [1075, 330], [1075, 387], [1075, 445],
];

const Check = () => (
  <svg width="12" height="11" viewBox="0 0 12 11" fill="none" stroke="#fff" strokeWidth="2.4">
    <path d="M1.5 5.5 L4.8 9 L10.5 1.5" />
  </svg>
);

const CheckItem = ({ on, label, w, clip, low, children }) => (
  <CheckRow>
    <CheckBox $on={on}>{on && <Check />}</CheckBox>
    <CheckLabel $w={w} $clip={clip} $low={low}>
      {label}
    </CheckLabel>
    {children}
  </CheckRow>
);

export default function App() {
  return (
    <Screen>
      <Global />
      <TitleBar>
        <TitleText>Family_schema.html - draw.io - Mozilla Firefox</TitleText>
        <Tray>
          <TrayItem $w={22}>
            <MdSettings size={24} color="#f4f2ec" />
            <BlueDot />
          </TrayItem>
          <TrayItem $w={42}>
            <WifiIcon />
          </TrayItem>
          <TrayItem $w={24}>
            <LangBox>En</LangBox>
          </TrayItem>
          <TrayItem $w={28}>
            <BluetoothIcon />
          </TrayItem>
          <TrayItem $w={32}>
            <BatteryIcon />
          </TrayItem>
          <TrayItem $w={34}>
            <VolumeIcon />
          </TrayItem>
          <TrayItem $w={47}>
            <Clock>17:12</Clock>
          </TrayItem>
          <TrayItem $w={31}>
            <PowerIcon />
          </TrayItem>
        </Tray>
      </TitleBar>
      <Desktop>
        <Launcher>
          <Tile $bg="linear-gradient(135deg, #a85c3c, #8a4a2e)">
            <UbuntuArt />
          </Tile>
          <Tile $bg="linear-gradient(#5a2e24, #7a5a50)">
            <FilesArt />
          </Tile>
          <Tile $bg="linear-gradient(#bd8458, #a9683e)" $pip $active>
            <FirefoxArt />
          </Tile>
          <Tile $bg="linear-gradient(#c2c0bd, #9d9a97)" $pip>
            <EditorArt />
          </Tile>
          <Tile $bg="linear-gradient(#55b985, #2f9e66)" $pip>
            <AtomArt />
          </Tile>
          <Tile $bg="linear-gradient(#7b4a38, #56281a)">
            <SettingsArt />
          </Tile>
          <Tile $bg="linear-gradient(#6a3c2a, #4e2a1e)" $bottom>
            <TrashArt />
          </Tile>
        </Launcher>
        <Browser>
          <TabStrip>
            {tabs.map((t) => (
              <Tab key={t.text} $active={t.active} $sep={t.sep} $pad={t.pad}>
                {t.icon}
                <TabText>{t.text}</TabText>
                <TabX dark={t.active} />
              </Tab>
            ))}
            <NewTab>
              <PlusIcon />
            </NewTab>
          </TabStrip>
          <NavBar>
            <BackButton>
              <BackArrow />
            </BackButton>
            <UrlBar>
              <UrlIcon $w={17}>
                <MdInfoOutline size={15} />
              </UrlIcon>
              <UrlIcon $w={17} $color="#5ba52f">
                <MdLock size={15} />
              </UrlIcon>
              <UrlText>
                https://www.<b>draw.io</b>/#G0B7SG1i4CmNGlUl84cFB4RVZCTkU
              </UrlText>
              <Reload>
                <MdRefresh size={17} />
              </Reload>
            </UrlBar>
            <NavIcon $w={38} $pad={8} $sep>
              <StarOutline />
            </NavIcon>
            <NavIcon $w={31}>
              <ClipboardIcon />
            </NavIcon>
            <NavIcon $w={45}>
              <MdFolder size={20} />
            </NavIcon>
            <NavIcon $w={32}>
              <DownloadIcon />
            </NavIcon>
            <NavIcon $w={44}>
              <MoveIcon />
            </NavIcon>
            <NavIcon $w={37} $sep>
              <FaWrench size={15} />
            </NavIcon>
            <NavIcon $w={43}>
              <MenuIcon />
            </NavIcon>
          </NavBar>
          <Header>
            <LogoBox>
              <DrawioMark />
            </LogoBox>
            <DocInfo>
              <DocTitle>Family_schema.html</DocTitle>
              <MenuRow>
                {menu.map(([name, w]) => (
                  <MenuItem key={name} $w={w}>
                    {name}
                  </MenuItem>
                ))}
                <Saved>All changes saved</Saved>
              </MenuRow>
            </DocInfo>
            <Account>
              <UserRow>
                Kokoh Tanamal
                <Caret />
                <MdLanguage size={18} color="#a8a8a8" style={{ marginLeft: 5 }} />
              </UserRow>
              <ShareButton>
                <MdPerson size={18} />
                Share
              </ShareButton>
            </Account>
          </Header>
          <Toolbar>
            <ToolGroup $w={107} $pad={61}>
              <LayoutIcon />
              <Caret $m="0 0 0 6px" />
            </ToolGroup>
            <ToolGroup $w={79} $pad={11}>
              <ZoomLabel>100%</ZoomLabel>
              <Caret $m="0 0 0 7px" />
            </ToolGroup>
            <ToolGroup $w={74} $pad={7}>
              <Tool>
                <MdZoomIn size={19} />
              </Tool>
              <Tool>
                <MdZoomOut size={19} />
              </Tool>
            </ToolGroup>
            <ToolGroup $w={72} $pad={6}>
              <Tool>
                <MdUndo size={19} />
              </Tool>
              <Tool $off>
                <MdRedo size={19} />
              </Tool>
            </ToolGroup>
            <ToolGroup $w={44} $pad={7}>
              <Tool $off>
                <MdDelete size={20} />
              </Tool>
            </ToolGroup>
            <ToolGroup $w={72} $pad={5}>
              <Tool $off>
                <ToFrontIcon />
              </Tool>
              <Tool $off>
                <ToBackIcon />
              </Tool>
            </ToolGroup>
            <ToolGroup $w={103} $pad={6}>
              <Tool $off>
                <BucketIcon />
              </Tool>
              <Tool $off>
                <MdBorderColor size={18} />
              </Tool>
              <Tool $off>
                <ShadowIcon />
              </Tool>
            </ToolGroup>
            <ToolGroup $w={102} $pad={14}>
              <ArrowIcon />
              <Caret $m="0 0 0 3px" />
              <Tool $w={46}>
                <WaypointIcon />
              </Tool>
              <Caret $m="0 0 0 -6px" />
            </ToolGroup>
            <ToolGroup $w={58} $pad={5} $last>
              <Tool $w={30}>
                <MdAdd size={22} color="#555" />
              </Tool>
              <Caret $m="0 0 0 0" />
            </ToolGroup>
            <Viewers>
              <ViewersText>No other viewers</ViewersText>
              <FocusIcon />
              <SplitIcon />
              <CollapseIcon />
            </Viewers>
          </Toolbar>
          <Content>
            <LeftColumn>
              <LeftTop>
                <Sidebar>
                  <Palette>
                    {paletteThumbs.map((thumb, i) => (
                      <div key={i}>{thumb}</div>
                    ))}
                  </Palette>
                  {sections.map((name) => (
                    <SectionRow key={name}>
                      <Arrow />
                      {name}
                    </SectionRow>
                  ))}
                </Sidebar>
                <LeftThumb />
              </LeftTop>
              <MoreShapes>More Shapes...</MoreShapes>
            </LeftColumn>
            <Splitter>||</Splitter>
            <CenterColumn>
              <Canvas>
                <Page>
                  {nodes.map((n) => (
                    <Node key={n.title} $x={n.x} $y={n.y} $h={n.h}>
                      <NodeHead>{n.title}</NodeHead>
                      <Fold />
                      <NodeBody>
                        {n.rows.map((r) => (
                          <div key={r}>{r}</div>
                        ))}
                      </NodeBody>
                    </Node>
                  ))}
                  <Overlay width="810" height="493" viewBox="306 190 810 493" fill="none" stroke="#111">
                    <path d="M536 311 H559 Q566 311 568 319 L602 488 Q604 500 615 500 H635" />
                    <path d="M628 496 V504 M635 496 L628 500 L635 504" />
                    <path d="M796 500 H818 Q826 500 830 492 L880 399 Q885 387 896 387 H915" />
                    <path d="M803 496 V504 M796 496 L803 500 L796 504" />
                    <path d="M892 387 L904 375 V399 Z" fill="#29b6f2" fillOpacity="0.2" stroke="none" />
                    <path d="M1099 387 L1087 375 V399 Z" fill="#29b6f2" fillOpacity="0.2" stroke="none" />
                    <path d="M995 526 L983 514 H1007 Z" fill="#29b6f2" fillOpacity="0.2" stroke="none" />
                    {marks.map(([x, y]) => (
                      <g key={`${x}-${y}`}>
                        <rect x={x - 2} y={y - 2} width="5" height="5" fill="#fff" stroke="none" />
                        <path
                          d={`M${x - 2} ${y - 2} L${x + 3} ${y + 3} M${x + 3} ${y - 2} L${x - 2} ${y + 3}`}
                          stroke="#1010f0"
                        />
                      </g>
                    ))}
                  </Overlay>
                </Page>
              </Canvas>
              <GutterBar />
              <HThumb />
              <PageTabs>
                <PageButton>
                  <MdMoreVert size={20} />
                </PageButton>
                <PageName>Page-1</PageName>
                <PageButton>
                  <MdAdd size={20} />
                </PageButton>
              </PageTabs>
            </CenterColumn>
            <RightPanel>
              <RightThumb />
              <PanelTitle>
                Diagram
                <PanelClose>
                  <MdClose size={14} />
                </PanelClose>
              </PanelTitle>
              <Section $pt={17} $pb={9}>
                <Heading $mb={10}>View</Heading>
                <CheckItem on label="Grid" w={61}>
                  <SpinInput>10 pt</SpinInput>
                  <Spinner>
                    <MdKeyboardArrowUp size={9} color="#666" />
                    <MdExpandMore size={9} color="#666" />
                  </Spinner>
                  <Swatch />
                </CheckItem>
                <CheckItem on label="Guides" />
                <CheckItem on label="Page View" clip />
                <CheckItem label="Background" w={70} clip>
                  <SmallButton>Image</SmallButton>
                </CheckItem>
              </Section>
              <Section $pt={13} $pb={10}>
                <Heading $mb={9}>Options</Heading>
                <CheckItem on low label="Connection Arrows" />
                <CheckItem on low label="Connection Points" />
                <CheckItem on low label="Autosave" />
              </Section>
              <Section $pt={13} $pb={14}>
                <Heading $mb={8}>Paper Size</Heading>
                <SelectBox>
                  US-Letter (8,5" x 11")
                  <MdExpandMore size={18} color="#444" />
                </SelectBox>
                <RadioRow>
                  <Radio $on />
                  <RadioLabel $w={50}>Portrait</RadioLabel>
                  <Radio />
                  <RadioLabel $w={70}>Landscape</RadioLabel>
                </RadioRow>
              </Section>
              <Section $pt={13} $pb={9}>
                <PanelButton>Edit Data</PanelButton>
                <PanelButton>Clear Default Style</PanelButton>
              </Section>
            </RightPanel>
          </Content>
          <Footer>
            <FooterCell $w={277} />
            <FooterCell $w={250} $pad={44} $gap={8}>
              <StarBadge />
              Google Chrome App
            </FooterCell>
            <FooterCell $w={329} $pad={45} $gap={13} $dark>
              <AtlassianMark />
              #1 Rated Confluence Add-on
            </FooterCell>
            <Socials>
              <Social>
                <FaGooglePlusG size={24} />
              </Social>
              <Social>
                <FaFacebookF size={17} />
              </Social>
              <Social>
                <FaTwitter size={17} />
              </Social>
              <Social>
                <FaGithub size={18} />
              </Social>
              <FooterClose>
                <MdClose size={15} />
              </FooterClose>
            </Socials>
          </Footer>
        </Browser>
      </Desktop>
    </Screen>
  );
}
